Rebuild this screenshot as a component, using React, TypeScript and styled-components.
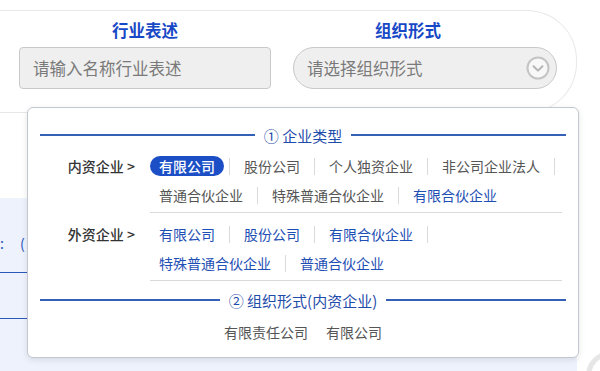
import React from 'react'
import styled, { createGlobalStyle } from 'styled-components'

const GlobalStyle = createGlobalStyle`
  html, body {
    margin: 0;
    padding: 0;
    background: #fff;
  }
  body {
    font-family: "Noto Sans CJK SC", "Noto Sans", sans-serif;
  }
  * {
    box-sizing: border-box;
  }
`

const Page = styled.div`
  position: relative;
  width: 600px;
  height: 371px;
  overflow: hidden;
  padding-top: 10px;
`

const SearchCard = styled.div`
  width: 577px;
  height: 103px;
  border: 1px solid #e8e8e8;
  border-left: none;
  border-radius: 0 50px 50px 0;
  display: flex;
  gap: 22px;
  padding: 8px 0 0 19px;
`

const Field = styled.div<{ $width: number }>`
  display: flex;
  flex-direction: column;
  gap: 6px;
  width: ${p => p.$width}px;
`

const FieldLabel = styled.div<{ $shift?: number }>`
  text-align: center;
  padding-right: ${p => (p.$shift ?? 0) * 2}px;
  font-size: 16.5px;
  line-height: 22px;
  font-weight: 700;
  color: #1748c6;
`

const TextInput = styled.div`
  height: 42px;
  display: flex;
  align-items: center;
  padding-left: 13px;
  background: #efefef;
  border: 1px solid #c9c9c9;
  border-radius: 4px;
  font-size: 16.5px;
  color: #7a7a7a;
`

const SelectBox = styled(TextInput)`
  justify-content: space-between;
  padding-right: 6px;
  border-radius: 21px;
`

const WhiteStrip = styled.div`
  width: 577px;
  height: 85px;
`

const BlueArea = styled.div`
  width: 577px;
  height: 200px;
  background: #edf2fd;
  padding-top: 35px;
  color: #2454b8;
  font-size: 14px;
`

const BlueText = styled.div`
  display: flex;
  gap: 16px;
  line-height: 20px;
`

const UnderLine = styled.div<{ $h: number }>`
  height: ${p => p.$h}px;
  border-bottom: 1px solid #2a58b8;
`

const FloatRing = styled.div`
  position: absolute;
  left: 586px;
  top: 351px;
  width: 50px;
  height: 50px;
  border: 5px solid #e6e6e6;
  border-radius: 50%;
`

const Popup = styled.div`
  position: absolute;
  left: 27px;
  top: 107px;
  width: 552px;
  background: #fff;
  border: 1px solid #c3c7cf;
  border-radius: 6px;
  box-shadow: 0 2px 6px rgba(0, 0, 0, 0.1);
  padding: 17px 12px 15px;
`

const SectionTitle = styled.div<{ $top?: number }>`
  display: flex;
  align-items: center;
  gap: 9px;
  height: 20px;
  margin-top: ${p => p.$top ?? 0}px;
  font-size: 15px;
  color: #1f4cab;
  white-space: nowrap;
`

const Rule = styled.div`
  flex: 1;
  height: 2px;
  background: #3560b8;
`

const Group = styled.div`
  display: flex;
`

const GroupLabel = styled.div`
  width: 110px;
  padding: 11px 15px 0 0;
  text-align: right;
  font-size: 14px;
  line-height: 20px;
  font-weight: 500;
  color: #333;
  white-space: nowrap;
`

const OptionList = styled.div`
  width: 412px;
  display: flex;
  flex-wrap: wrap;
  align-items: center;
  row-gap: 9px;
  padding: 11px 0 7px;
  border-bottom: 1px solid #d9d9d9;
`

const Entry = styled.div`
  display: inline-flex;
  align-items: center;
`

const Option = styled.span<{ $tone: 'gray' | 'blue'; $active?: boolean }>`
  display: inline-block;
  height: 20px;
  line-height: 20px;
  padding: 0 9px;
  border-radius: 10px;
  font-size: 14px;
  font-weight: ${p => (p.$active ? 500 : 400)};
  white-space: nowrap;
  color: ${p => (p.$active ? '#fff' : p.$tone === 'blue' ? '#1e4fb4' : '#555')};
  background: ${p => (p.$active ? '#1c4fc6' : 'transparent')};
`

const Sep = styled.span`
  width: 1px;
  height: 17px;
  margin: 0 5px;
  background: #dadada;
`

const FormRow = styled.div`
  display: flex;
  justify-content: center;
  margin-top: 12px;
`

type Opt = { text: string; tone: 'gray' | 'blue'; active?: boolean; sep: boolean }

const domestic: Opt[] = [
  { text: '有限公司', tone: 'gray', active: true, sep: true },
  { text: '股份公司', tone: 'gray', sep: true },
  { text: '个人独资企业', tone: 'gray', sep: true },
  { text: '非公司企业法人', tone: 'gray', sep: true },
  { text: '普通合伙企业', tone: 'gray', sep: true },
  { text: '特殊普通合伙企业', tone: 'gray', sep: true },
  { text: '有限合伙企业', tone: 'blue', sep: false },
]

const foreign: Opt[] = [
  { text: '有限公司', tone: 'blue', sep: true },
  { text: '股份公司', tone: 'blue', sep: true },
  { text: '有限合伙企业', tone: 'blue', sep: true },
  { text: '特殊普通合伙企业', tone: 'blue', sep: true },
  { text: '普通合伙企业', tone: 'blue', sep: false },
]

const ChevronCircle: React.FC = () => (
  <svg width="24" height="24" viewBox="0 0 24 24">
    <circle cx="12" cy="12" r="10.5" fill="#f8f8f8" stroke="#c4c4c4" strokeWidth="2" />
    <path d="M7.5 10.2 L12 14.6 L16.5 10.2" fill="none" stroke="#b5b5b5" strokeWidth="2"
      strokeLinecap="round" strokeLinejoin="round" />
  </svg>
)

const OptionGroup: React.FC<{ label: string; items: Opt[] }> = ({ label, items }) => (
  <Group>
    <GroupLabel>{label}</GroupLabel>
    <OptionList>
      {items.map(o => (
        <Entry key={o.text}>
          <Option $tone={o.tone} $active={o.active}>{o.text}</Option>
          {o.sep && <Sep />}
        </Entry>
      ))}
    </OptionList>
  </Group>
)

export default function App() {
  return (
    <>
      <GlobalStyle />
      <Page>
        <SearchCard>
          <Field $width={252}>
            <FieldLabel>行业表述</FieldLabel>
            <TextInput>请输入名称行业表述</TextInput>
          </Field>
          <Field $width={264}>
            <FieldLabel $shift={17}>组织形式</FieldLabel>
            <SelectBox>
              请选择组织形式
              <ChevronCircle />
            </SelectBox>
          </Field>
        </SearchCard>
        <WhiteStrip />
        <BlueArea>
          <BlueText>
            <span>:</span>
            <span>(</span>
          </BlueText>
          <UnderLine $h={20} />
          <UnderLine $h={46} />
        </BlueArea>
        <FloatRing />

        <Popup>
          <SectionTitle>
            <Rule />
            ① 企业类型
            <Rule />
          </SectionTitle>
          <OptionGroup label="内资企业 >" items={domestic} />
          <OptionGroup label="外资企业 >" items={foreign} />
          <SectionTitle $top={9}>
            <Rule />
            ② 组织形式(内资企业)
            <Rule />
          </SectionTitle>
          <FormRow>
            <Option $tone="gray">有限责任公司</Option>
            <Option $tone="gray">有限公司</Option>
          </FormRow>
        </Popup>
      </Page>
    </>
  )
}
